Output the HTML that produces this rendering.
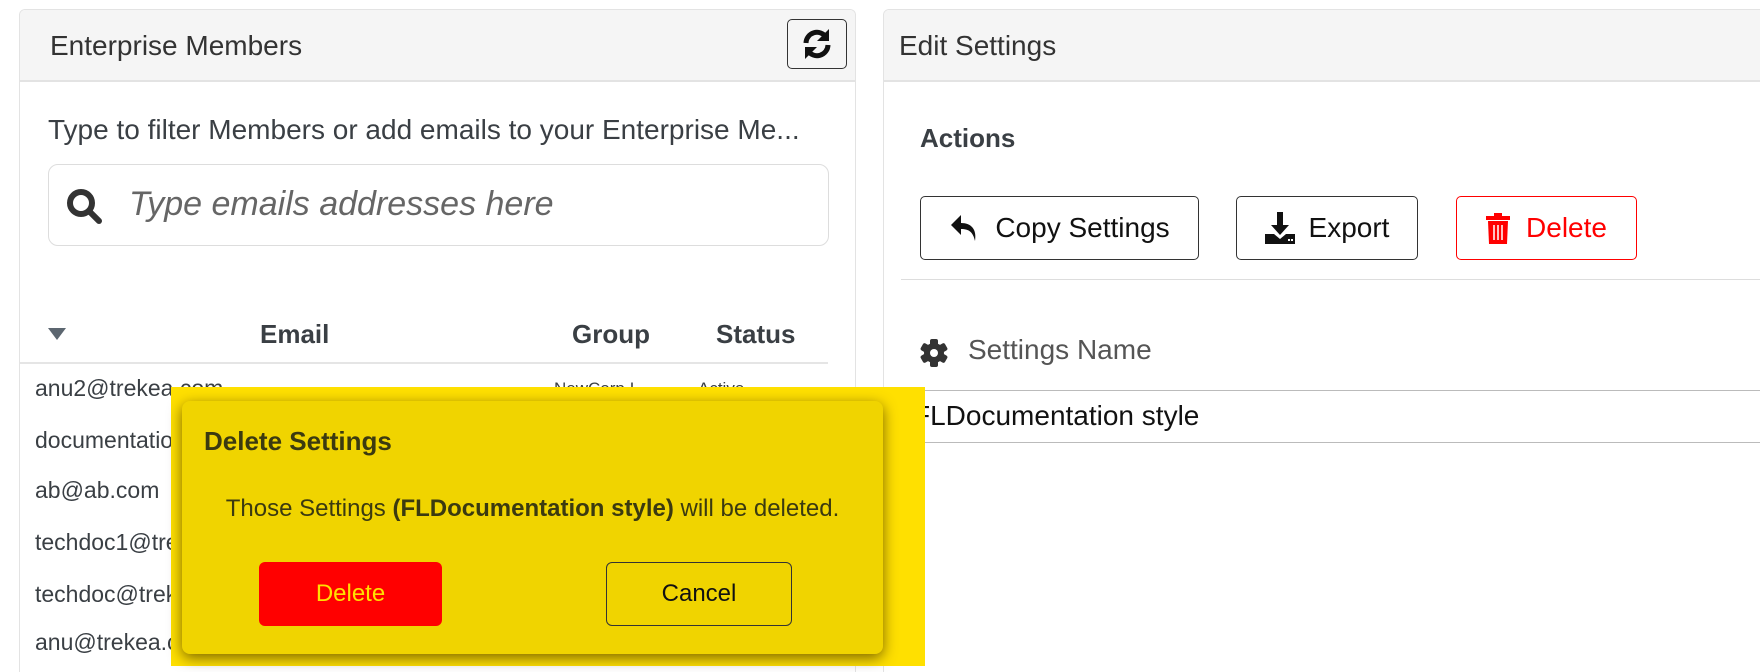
<!DOCTYPE html>
<html><head><meta charset="utf-8"><style>
*{box-sizing:border-box;margin:0;padding:0}
html,body{width:1760px;height:672px;overflow:hidden}
body{background:#fff;font-family:"Liberation Sans",sans-serif;color:#3a3f44;position:relative}
.abs{position:absolute}
.panel{position:absolute;border:1px solid #e3e3e3;border-bottom:none;border-radius:6px 6px 0 0;background:#fff;overflow:hidden}
.hdr{position:absolute;left:0;right:0;top:0;height:72px;background:#f5f5f5;border-bottom:2px solid #e3e3e3}
.t{position:absolute;white-space:nowrap;line-height:1}
.btn{position:absolute;border:1.5px solid #333;border-radius:5px;background:#fff;display:flex;align-items:center;justify-content:center;font-size:28px;color:#111}
</style></head><body>

<div class="panel" style="left:19px;top:9px;width:837px;height:663px">
 <div class="hdr"></div>
 <div class="t" style="left:30px;top:22px;font-size:28px;color:#333">Enterprise Members</div>
 <div class="abs" style="left:767px;top:9px;width:60px;height:50px;border:1.5px solid #333;border-radius:5px;background:#f5f5f5">
  <svg width="60" height="50" viewBox="0 0 60 50" style="position:absolute;left:-1px;top:-1px"><g fill="none" stroke="#111" stroke-width="5"><path d="M19 24a11 11 0 0 1 20-6"/><path d="M41 26a11 11 0 0 1-20 6"/></g><path d="M42 10v12h-12z" fill="#111"/><path d="M18 40v-12h12z" fill="#111"/></svg>
 </div>
 <div class="t" style="left:28px;top:106px;font-size:28px">Type to filter Members or add emails to your Enterprise Me...</div>
 <div class="abs" style="left:28px;top:154px;width:781px;height:82px;border:1px solid #ddd;border-radius:10px"></div>
 <svg class="abs" style="left:46px;top:178px" width="38" height="38" viewBox="0 0 38 38"><circle cx="15" cy="15" r="11" fill="none" stroke="#333" stroke-width="6"/><path d="M23 23l10 10" stroke="#333" stroke-width="6" stroke-linecap="round"/></svg>
 <div class="t" style="left:109px;top:177px;font-size:34px;font-style:italic;color:#666">Type emails addresses here</div>
 <svg class="abs" style="left:28px;top:318px" width="18" height="12"><path d="M0 0h18L9 12z" fill="#5c6670"/></svg>
 <div class="t" style="left:240px;top:311px;font-size:26px;font-weight:bold">Email</div>
 <div class="t" style="left:552px;top:311px;font-size:26px;font-weight:bold">Group</div>
 <div class="t" style="left:696px;top:311px;font-size:26px;font-weight:bold">Status</div>
 <div class="abs" style="left:0;top:352px;width:808px;height:2px;background:#e5e5e5"></div>
 <div class="t" style="left:15px;top:367px;font-size:23px">anu2@trekea.com</div>
 <div class="t" style="left:534px;top:370px;font-size:17px">NewCorp I...</div>
 <div class="t" style="left:678px;top:370px;font-size:17px">Active</div>
 <div class="t" style="left:15px;top:419px;font-size:23px">documentation</div>
 <div class="t" style="left:15px;top:469px;font-size:23px">ab@ab.com</div>
 <div class="t" style="left:15px;top:521px;font-size:23px">techdoc1@trekea.com</div>
 <div class="t" style="left:15px;top:573px;font-size:23px">techdoc@trekea.com</div>
 <div class="t" style="left:15px;top:621px;font-size:23px">anu@trekea.com</div>
</div>

<div class="panel" style="left:883px;top:9px;width:900px;height:663px">
 <div class="hdr"></div>
 <div class="t" style="left:15px;top:22px;font-size:28px;color:#333">Edit Settings</div>
 <div class="t" style="left:36px;top:115px;font-size:26px;font-weight:bold">Actions</div>
 <div class="abs" style="left:17px;top:269px;width:900px;height:1px;background:#ddd"></div>
 <svg class="abs" style="left:36px;top:328px" width="28" height="30" viewBox="0 0 28 30"><g fill="#333"><circle cx="14" cy="15" r="10"/><rect x="10" y="1" width="8" height="28" rx="2"/><rect x="10" y="1" width="8" height="28" rx="2" transform="rotate(60 14 15)"/><rect x="10" y="1" width="8" height="28" rx="2" transform="rotate(120 14 15)"/></g><circle cx="14" cy="15" r="4" fill="#fff"/></svg>
 <div class="t" style="left:84px;top:326px;font-size:28px;color:#555">Settings Name</div>
 <div class="abs" style="left:18px;top:380px;width:900px;height:53px;border:1px solid #bbb;border-radius:4px"></div>
 <div class="t" style="left:29px;top:392px;font-size:28px;color:#111">FLDocumentation style</div>
</div>
<div class="btn" style="left:920px;top:196px;width:279px;height:64px"><svg width="32" height="30" viewBox="0 0 32 30" style="margin-right:14px"><path d="M12 2L2 12l10 10v-6c8 0 12 3 14 12 2-12-4-18-14-18z" fill="#111"/></svg>Copy Settings</div>
<div class="btn" style="left:1236px;top:196px;width:182px;height:64px"><svg width="30" height="32" viewBox="0 0 30 32" style="margin-right:14px"><path d="M12 0h6v13h6l-9 10-9-10h6z" fill="#111"/><path d="M0 22h9l6 5 6-5h9v10H0z" fill="#111"/><rect x="23" y="27" width="2" height="2" fill="#fff"/><rect x="26" y="27" width="2" height="2" fill="#fff"/></svg>Export</div>
<div class="btn" style="left:1456px;top:196px;width:181px;height:64px;border-color:#f00;color:#f00"><svg width="24" height="32" viewBox="0 0 24 32" style="margin-right:16px"><rect x="0" y="4" width="24" height="4" fill="#f00"/><rect x="8" y="1" width="8" height="4" fill="#f00"/><path d="M2 9h20l-1 23H3z" fill="#f00"/><g stroke="#fff" stroke-width="1.5"><path d="M8 13v15M12 13v15M16 13v15"/></g></svg>Delete</div>

<div class="abs" style="left:171px;top:387px;width:754px;height:279px;background:#ffe000"></div>
<div class="abs" style="left:182px;top:401px;width:701px;height:253px;background:#f0d400;border-radius:8px;box-shadow:0 4px 14px rgba(80,60,0,.75)">
 <div class="t" style="left:22px;top:27px;font-size:26px;font-weight:bold;color:#3b3a10">Delete Settings</div>
 <div class="t" style="left:0;width:701px;text-align:center;top:96px;font-size:24px;color:#3b3a10">Those Settings <b>(FLDocumentation style)</b> will be deleted.</div>
 <div class="abs" style="left:77px;top:161px;width:183px;height:64px;background:#f00;border-radius:6px;color:#ffe000;font-size:24px;display:flex;align-items:center;justify-content:center">Delete</div>
 <div class="abs" style="left:424px;top:161px;width:186px;height:64px;border:1.5px solid #333;border-radius:6px;color:#111;font-size:24px;display:flex;align-items:center;justify-content:center">Cancel</div>
</div>
</body></html>
